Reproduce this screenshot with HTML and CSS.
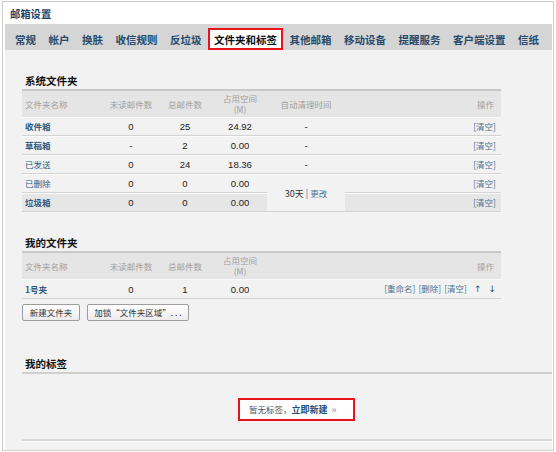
FILE: index.html
```html
<!DOCTYPE html>
<html lang="zh-CN">
<head>
<meta charset="utf-8">
<title>邮箱设置</title>
<link rel="stylesheet" href="styles.css">
</head>
<body>
<div class="frame">
  <div class="title">邮箱设置</div>
  <div class="tabs">
    <span class="tab">常规</span>
    <span class="tab">帐户</span>
    <span class="tab">换肤</span>
    <span class="tab">收信规则</span>
    <span class="tab">反垃圾</span>
    <span class="tab active">文件夹和标签</span>
    <span class="tab">其他邮箱</span>
    <span class="tab">移动设备</span>
    <span class="tab">提醒服务</span>
    <span class="tab">客户端设置</span>
    <span class="tab">信纸</span>
  </div>
  <div class="content">
    <div class="sec-title">系统文件夹</div>
    <table class="ftable">
      <colgroup>
        <col class="w-name"><col class="w-unread"><col class="w-total"><col class="w-size"><col class="w-auto"><col class="w-op">
      </colgroup>
      <thead>
        <tr><th class="c-name">文件夹名称</th><th>未读邮件数</th><th>总邮件数</th><th class="two">占用空间<br>(M)</th><th>自动清理时间</th><th class="c-op">操作</th></tr>
      </thead>
      <tbody>
        <tr><td class="c-name"><a class="fname strong">收件箱</a></td><td class="num">0</td><td class="num">25</td><td class="num">24.92</td><td class="num">-</td><td class="c-op"><a class="op">[清空]</a></td></tr>
        <tr><td class="c-name"><a class="fname strong">草稿箱</a></td><td class="num">-</td><td class="num">2</td><td class="num">0.00</td><td class="num">-</td><td class="c-op"><a class="op">[清空]</a></td></tr>
        <tr><td class="c-name"><a class="fname">已发送</a></td><td class="num">0</td><td class="num">24</td><td class="num">18.36</td><td class="num">-</td><td class="c-op"><a class="op">[清空]</a></td></tr>
        <tr><td class="c-name"><a class="fname">已删除</a></td><td class="num">0</td><td class="num">0</td><td class="num">0.00</td><td class="clean" rowspan="2"><span class="days">30天</span> <span class="bar">|</span> <a class="op">更改</a></td><td class="c-op"><a class="op">[清空]</a></td></tr>
        <tr class="hover"><td class="c-name"><a class="fname strong">垃圾箱</a></td><td class="num">0</td><td class="num">0</td><td class="num">0.00</td><td class="c-op"><a class="op">[清空]</a></td></tr>
      </tbody>
    </table>

    <div class="sec-title">我的文件夹</div>
    <table class="ftable">
      <colgroup>
        <col class="w-name"><col class="w-unread"><col class="w-total"><col class="w-size"><col class="w-auto"><col class="w-op">
      </colgroup>
      <thead>
        <tr><th class="c-name">文件夹名称</th><th>未读邮件数</th><th>总邮件数</th><th class="two">占用空间<br>(M)</th><th></th><th class="c-op">操作</th></tr>
      </thead>
      <tbody>
        <tr><td class="c-name"><a class="fname strong">1号夹</a></td><td class="num">0</td><td class="num">1</td><td class="num">0.00</td><td></td><td class="c-op"><a class="op">[重命名]</a><a class="op gap">[删除]</a><a class="op gap">[清空]</a><a class="arrow">↑</a><a class="arrow">↓</a></td></tr>
      </tbody>
    </table>
    <div class="btns">
      <button class="btn b1">新建文件夹</button>
      <button class="btn b2">加锁“文件夹区域”. . .</button>
    </div>

    <div class="tag-sec">
      <div class="sec-title tag-title">我的标签</div>
      <div class="tag-box"><span class="none">暂无标签，</span><a class="new">立即新建</a><span class="raquo">»</span></div>
      <div class="tag-end"></div>
    </div>
  </div>
</div>
</body>
</html>
```

FILE: styles.css
```css
html, body {
  margin: 0;
  padding: 0;
  background: #ffffff;
}

body {
  font-family: "Noto Sans CJK SC", "Liberation Sans", sans-serif;
  color: #333;
}

.frame {
  margin: 1px 0 0 2px;
  width: 547px;
  height: 448px;
  border: 1px solid #cdcdcd;
  padding: 0 1px 0 2px;
  display: flex;
  flex-direction: column;
  background: #fff;
}

.title {
  height: 22px;
  line-height: 24px;
  padding-left: 5px;
  font-size: 10.3px;
  font-weight: bold;
  color: #1d466b;
}

.tabs {
  height: 26px;
  background: #d5d5d5;
  display: flex;
  align-items: flex-end;
  padding-left: 3.75px;
}

.tab {
  height: 22px;
  line-height: 23px;
  padding: 0 6.25px;
  font-size: 10.5px;
  font-weight: bold;
  color: #274b6d;
  white-space: nowrap;
  box-sizing: border-box;
}

.tab.active {
  background: #fff;
  color: #111;
  border: 2px solid #e8141b;
  padding: 0 4.25px;
  line-height: 19px;
}

.content {
  flex: 1;
  background: #f2f2f2;
  padding-left: 17px;
}

.sec-title {
  margin-top: 23px;
  height: 16px;
  line-height: 16px;
  padding-left: 3px;
  font-size: 10.5px;
  font-weight: bold;
  color: #111;
}

.ftable {
  width: 479px;
  table-layout: fixed;
  border-collapse: separate;
  border-spacing: 0;
  border-top: 2px solid #c8c8c8;
}

.w-name { width: 83px; }
.w-unread { width: 52px; }
.w-total { width: 56px; }
.w-size { width: 54px; }
.w-auto { width: 78px; }
.w-op { width: 156px; }

.ftable th {
  height: 26px;
  padding: 0;
  background: #e5e5e5;
  font-size: 8.5px;
  font-weight: normal;
  color: #a0a0a0;
  text-align: center;
  vertical-align: middle;
  line-height: 11px;
  white-space: nowrap;
}

.ftable td {
  height: 17px;
  padding: 0;
  border-top: 1px solid #fbfbfb;
  border-bottom: 1px solid #d4d4d4;
  text-align: center;
  vertical-align: middle;
  font-size: 9px;
  line-height: 17px;
  white-space: nowrap;
}

.ftable .c-name {
  text-align: left;
  padding-left: 3px;
}

.ftable .c-op {
  text-align: right;
  padding-right: 5px;
}

.ftable th.c-op {
  padding-right: 7px;
}

.ftable tr.hover td {
  background: #e6e6e6;
}

.num {
  font-family: "Liberation Sans", sans-serif;
  font-size: 9.5px !important;
  color: #222;
}

.fname {
  color: #2e5c82;
  font-size: 8.5px;
}

.fname.strong {
  font-weight: bold;
}

.op {
  color: #4a7392;
  font-size: 8.5px;
}

.op.gap {
  margin-left: 3px;
}

.arrow {
  color: #2b5378;
  font-family: "DejaVu Sans", sans-serif;
  font-size: 9px;
  margin-left: 7px;
}

.clean {
  background: #f2f2f2;
  font-size: 9px;
}

.clean .days {
  color: #333;
}

.clean .bar {
  color: #7a4f9a;
}

.btns {
  display: flex;
  gap: 7px;
  margin-top: 5px;
}

.btn {
  height: 17px;
  padding: 0;
  margin: 0;
  border: 1px solid #9d9d9d;
  border-radius: 2px;
  background: linear-gradient(#ffffff, #ececec);
  font-family: "Noto Sans CJK SC", sans-serif;
  font-size: 8.5px;
  color: #333;
  line-height: 15px;
  box-sizing: border-box;
}

.b1 { width: 58px; }
.b2 { width: 102px; }

.tag-title {
  margin-top: 35px;
  border-bottom: 2px solid #cfcfcf;
}

.tag-box {
  margin: 24px 0 0 216px;
  width: 117px;
  height: 23px;
  box-sizing: border-box;
  border: 2px solid #e8141b;
  background: #fff;
  padding-left: 9px;
  line-height: 19px;
  font-size: 8.5px;
  white-space: nowrap;
}

.none {
  color: #555;
}

.new {
  color: #1f4e79;
  font-weight: bold;
  font-size: 9px;
}

.raquo {
  color: #6d8aa6;
  font-family: "Liberation Sans", sans-serif;
  font-size: 9px;
  margin-left: 4px;
}

.tag-end {
  margin-top: 18px;
  height: 0;
  border-top: 2px solid #d9d9d9;
  border-bottom: 1px solid #fbfbfb;
}
```
